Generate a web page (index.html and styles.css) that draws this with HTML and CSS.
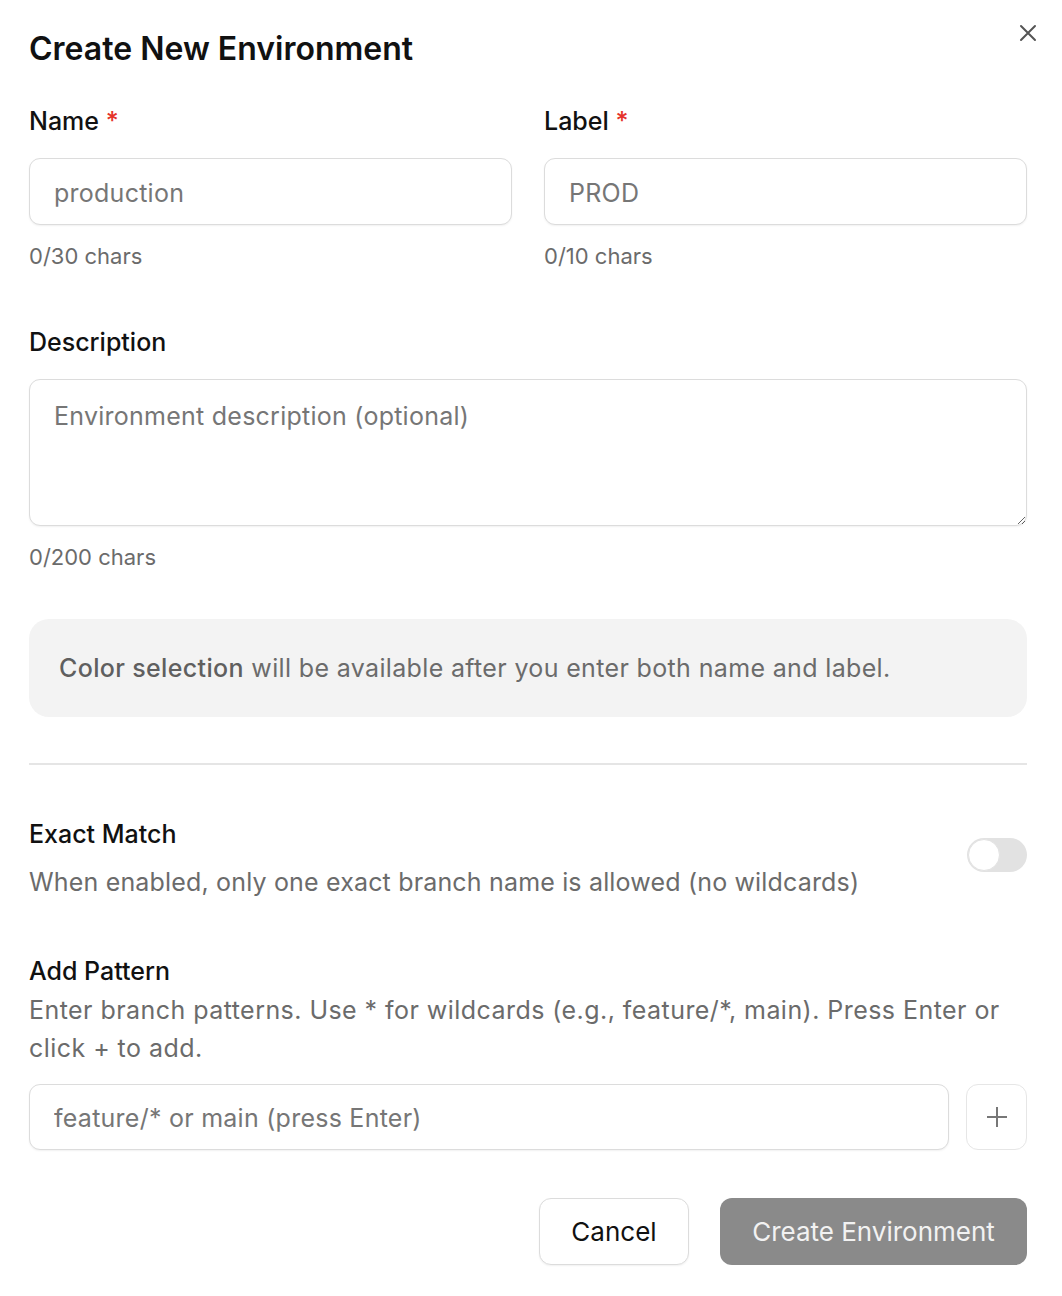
FILE: index.html
```html
<!DOCTYPE html>
<html lang="en">
<head>
    <meta charset="UTF-8">
    <meta name="viewport" content="width=device-width, initial-scale=1.0">
    <title>Create New Environment</title>
    <link rel="stylesheet" href="styles.css">
</head>
<body>

    <div class="dialog">
        <div class="dialog-header">
            <h1>Create New Environment</h1>
            <button type="button" class="close-btn" aria-label="Close">
                <svg width="18" height="18" viewBox="0 0 18 18" fill="none" stroke="#555" stroke-width="2" stroke-linecap="round">
                    <path d="M2 2L16 16M16 2L2 16"/>
                </svg>
            </button>
        </div>

        <form id="envForm">
            <div class="form-row">
                <div class="form-group">
                    <label for="name">Name <span class="req">*</span></label>
                    <input type="text" id="name" placeholder="production">
                    <div class="hint">0/30 chars</div>
                </div>
                <div class="form-group">
                    <label for="label">Label <span class="req">*</span></label>
                    <input type="text" id="label" placeholder="PROD">
                    <div class="hint">0/10 chars</div>
                </div>
            </div>

            <div class="form-group desc-group">
                <label for="desc">Description</label>
                <textarea id="desc" placeholder="Environment description (optional)"></textarea>
                <div class="hint">0/200 chars</div>
            </div>

            <div class="color-note">
                <strong>Color selection</strong> will be available after you enter both name and label.
            </div>

            <hr class="divider">

            <div class="switch-row">
                <div>
                    <div class="section-title">Exact Match</div>
                    <div class="section-text">When enabled, only one exact branch name is allowed (no wildcards)</div>
                </div>
                <span class="toggle"><span class="knob"></span></span>
            </div>

            <div class="pattern">
                <div class="section-title">Add Pattern</div>
                <div class="section-text pattern-text">Enter branch patterns. Use * for wildcards (e.g., feature/*, main). Press Enter or click + to add.</div>
                <div class="pattern-input">
                    <input type="text" placeholder="feature/* or main (press Enter)">
                    <button type="button" class="add-btn" aria-label="Add">
                        <svg width="22" height="22" viewBox="0 0 22 22" fill="none" stroke="#777" stroke-width="2">
                            <path d="M11 1V21M1 11H21"/>
                        </svg>
                    </button>
                </div>
            </div>

            <div class="actions">
                <button type="button" class="btn-cancel">Cancel</button>
                <button type="button" class="btn-create" disabled>Create Environment</button>
            </div>
        </form>
    </div>

</body>
</html>
```

FILE: styles.css
```css
body {
    margin: 0;
    font-family: Inter, "Noto Sans", sans-serif;
    color: #111;
    background: #fff;
}
.dialog {
    padding: 28px 35px 30px 29px;
}
.dialog-header {
    display: flex;
    justify-content: space-between;
    align-items: flex-start;
}
h1 {
    margin: 0;
    font-size: 32px;
    line-height: 42px;
    font-weight: 600;
}
.close-btn {
    background: none;
    border: none;
    padding: 0;
    margin: -4px -10px 0 0;
    cursor: pointer;
}
.form-row {
    display: grid;
    grid-template-columns: 1fr 1fr;
    gap: 32px;
    margin-top: 35px;
}
label {
    display: block;
    font-size: 25px;
    line-height: 32px;
    font-weight: 500;
    margin-bottom: 21px;
}
.req {
    color: #e5332a;
}
input[type="text"], textarea {
    width: 100%;
    box-sizing: border-box;
    height: 67px;
    padding: 2px 24px 0;
    font-family: inherit;
    font-size: 25px;
    letter-spacing: 0.25px;
    color: #111;
    border: 1px solid #dcdcdc;
    border-radius: 11px;
    box-shadow: 0 1px 2px rgba(0, 0, 0, 0.06);
    background: #fff;
    outline: none;
}
input::placeholder, textarea::placeholder {
    color: #767676;
}
textarea {
    display: block;
    height: 147px;
    padding: 20px 24px;
    line-height: 32px;
    resize: vertical;
}
.hint {
    margin-top: 17px;
    font-size: 22px;
    line-height: 28px;
    color: #6b6b6b;
}
.desc-group {
    margin-top: 56px;
}
.color-note {
    margin-top: 48px;
    padding: 33px 30px;
    line-height: 32px;
    background: #f3f3f3;
    border-radius: 20px;
    font-size: 25px;
    letter-spacing: 0.35px;
    color: #6b6b6b;
}
.color-note strong {
    font-weight: 500;
    color: #5f5f5f;
}
.divider {
    margin: 46px 0 0;
    border: none;
    border-top: 2px solid #e5e5e5;
}
.switch-row {
    display: flex;
    justify-content: space-between;
    align-items: center;
    margin-top: 53px;
}
.section-title {
    font-size: 25px;
    line-height: 32px;
    font-weight: 500;
}
.section-text {
    margin-top: 16px;
    font-size: 25px;
    line-height: 32px;
    letter-spacing: 0.17px;
    color: #6b6b6b;
}
.toggle {
    position: relative;
    width: 60px;
    height: 34px;
    border-radius: 17px;
    background: #e2e2e2;
    margin-top: -6px;
    flex-shrink: 0;
}
.knob {
    position: absolute;
    left: 1px;
    top: 1px;
    width: 30px;
    height: 30px;
    border-radius: 50%;
    background: #fff;
    border: 1px solid #e2e2e2;
}
.pattern {
    margin-top: 57px;
}
.pattern-text {
    margin-top: 4px;
    line-height: 38px;
    letter-spacing: 0.45px;
}
.pattern-input {
    display: flex;
    gap: 17px;
    margin-top: 17px;
}
.pattern-input input {
    flex: 1;
    height: 66px;
}
.add-btn {
    width: 61px;
    height: 66px;
    flex-shrink: 0;
    background: #fff;
    border: 1px solid #e6e6e6;
    border-radius: 12px;
    display: flex;
    align-items: center;
    justify-content: center;
    cursor: pointer;
    padding: 0;
}
.actions {
    display: flex;
    justify-content: flex-end;
    gap: 31px;
    margin-top: 48px;
}
.actions button {
    height: 67px;
    border-radius: 12px;
    font-family: inherit;
    font-size: 26px;
    cursor: pointer;
}
.btn-cancel {
    width: 150px;
    background: #fff;
    border: 1px solid #dcdcdc;
    box-shadow: 0 1px 2px rgba(0, 0, 0, 0.06);
    color: #111;
}
.btn-create {
    width: 307px;
    background: #8a8a8a;
    border: none;
    color: #f2f2f2;
}
```
